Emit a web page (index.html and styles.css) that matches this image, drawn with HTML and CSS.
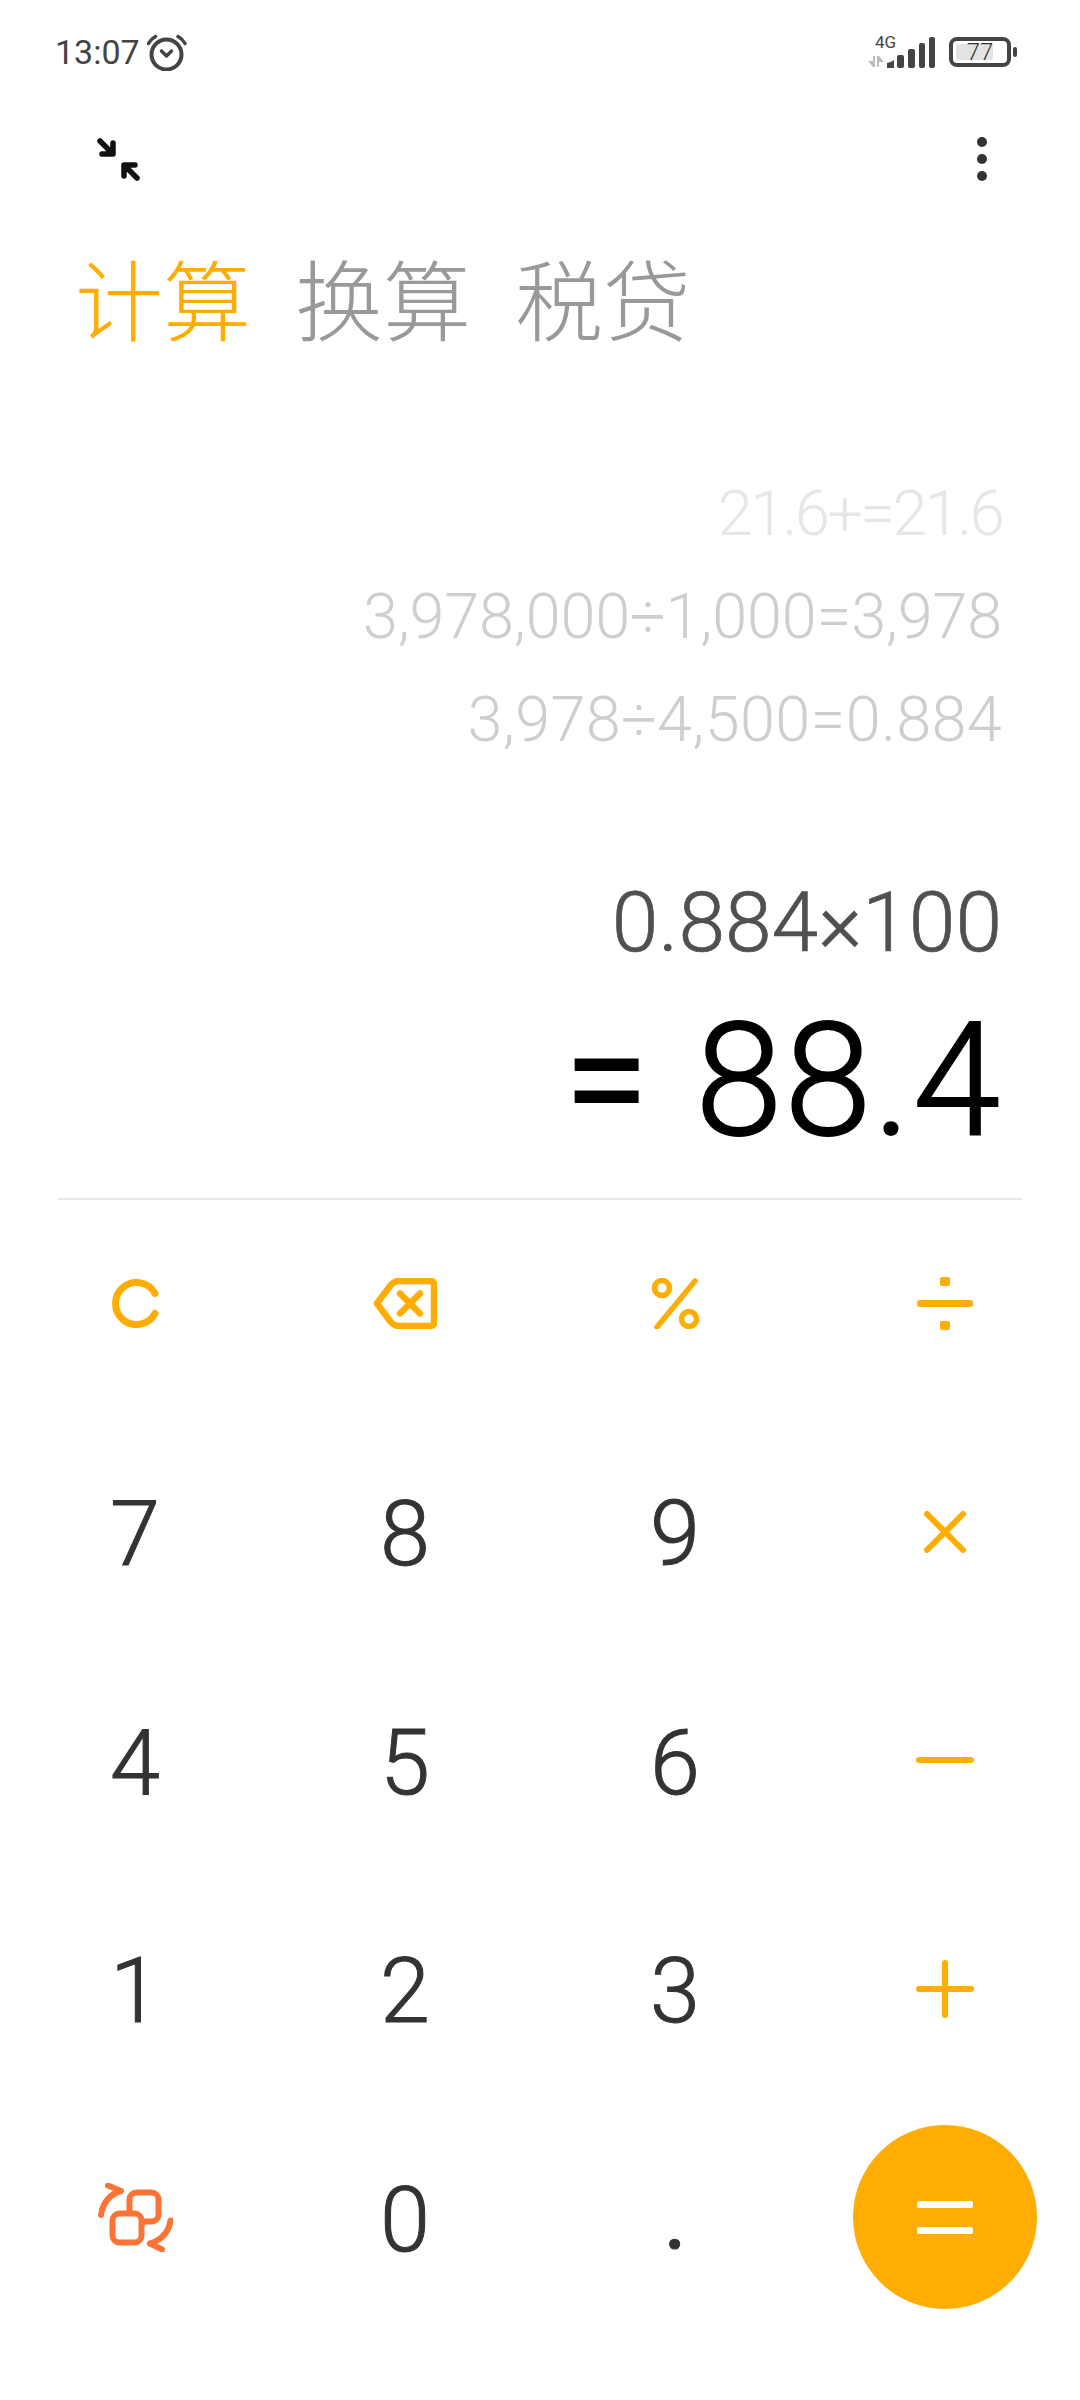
FILE: index.html
```html
<!DOCTYPE html>
<html lang="zh">
    <head>
        <meta charset="utf-8"/>
        <title>计算器</title>
        <link rel="stylesheet" href="styles.css">
    </head>
    <body>
        <div class="statusBar">
            <div class="statusLeft">
                <span class="clock">13:07</span>
                <svg class="alarm" width="40" height="37" viewBox="0 0 40 37" fill="none" stroke="#444444" stroke-linecap="round" stroke-linejoin="round">
                    <circle cx="19.5" cy="20.5" r="15" stroke-width="4"/>
                    <path d="M14.5 17l5 5 5-5" stroke-width="3.5"/>
                    <path d="M1.5 9.5Q4 5 8.5 2.5M38 9.5Q35.5 5 31 2.5" stroke-width="3.5"/>
                </svg>
            </div>
            <div class="statusRight">
                <div class="network">
                    <span class="netLabel">4G</span>
                    <svg width="68" height="32" viewBox="0 0 68 32" fill="#444444">
                        <path d="M5 20h2v11H5L0 25h5z" fill="#bbbbbb"/>
                        <path d="M9 20h2l5 6h-5v5H9z" fill="#bbbbbb"/>
                        <path d="M19 27q5-1 7-3v8h-7z"/>
                        <rect x="29" y="19" width="7" height="13" rx="2"/>
                        <rect x="40" y="13" width="7" height="19" rx="2"/>
                        <rect x="51" y="7" width="6" height="25" rx="2"/>
                        <rect x="61" y="1" width="6" height="31" rx="2"/>
                    </svg>
                </div>
                <div class="battery">
                    <div class="batteryBody">
                        <div class="batteryFill"></div>
                        <span class="batteryText">77</span>
                    </div>
                    <div class="batteryTip"></div>
                </div>
            </div>
        </div>

        <div class="toolBar">
            <svg width="43" height="43" viewBox="0 0 43 43" fill="none" stroke="#111111" stroke-width="5.5" stroke-linecap="round" stroke-linejoin="round">
                <path d="M3 3l12 12M16 5v11H5"/>
                <path d="M40 40L28 28M27 38V27h11"/>
            </svg>
            <div class="moreDots"><i></i><i></i><i></i></div>
        </div>

        <div class="tabs">
            <span class="tab tabActive">计算</span>
            <span class="tab">换算</span>
            <span class="tab">税贷</span>
        </div>

        <div class="display">
            <div class="history histFaint">21.6+=21.6</div>
            <div class="history histWide">3,978,000÷1,000=3,978</div>
            <div class="history histLast">3,978÷4,500=0.884</div>
            <div class="expression">0.884×100</div>
            <div class="result"><span class="resultEq">=</span>88.4</div>
        </div>

        <div class="keypad">
            <div class="key">
                <svg width="47" height="49" viewBox="0 0 47 49" fill="none" stroke="#ffad03" stroke-width="7" stroke-linecap="round">
                    <path d="M43 14.5A21 21 0 1 0 43 34.5"/>
                </svg>
            </div>
            <div class="key">
                <svg width="64" height="51" viewBox="0 0 64 51" fill="none" stroke="#ffad03" stroke-width="6.5" stroke-linecap="round" stroke-linejoin="round">
                    <path d="M4 25.5L17 8q4-5 9-5h31q4 0 4 4v37q0 4-4 4H26q-5 0-9-5z"/>
                    <path d="M27 15.5l20 20M47 15.5l-20 20"/>
                </svg>
            </div>
            <div class="key">
                <svg width="47" height="51" viewBox="0 0 47 51" fill="none" stroke="#ffad03" stroke-width="5.5" stroke-linecap="round">
                    <circle cx="10" cy="10" r="7.5"/>
                    <circle cx="37" cy="41" r="7.5"/>
                    <path d="M43 3L5 49"/>
                </svg>
            </div>
            <div class="key">
                <svg width="56" height="53" viewBox="0 0 56 53" fill="#ffad03">
                    <rect x="0" y="23" width="56" height="7" rx="3"/>
                    <rect x="23" y="0" width="10" height="9" rx="2"/>
                    <rect x="23" y="44" width="10" height="9" rx="2"/>
                </svg>
            </div>

            <div class="key keyNum">7</div>
            <div class="key keyNum">8</div>
            <div class="key keyNum">9</div>
            <div class="key">
                <svg width="44" height="44" viewBox="0 0 44 44" stroke="#ffad03" stroke-width="6" stroke-linecap="round">
                    <path d="M4 4l36 36M40 4L4 40"/>
                </svg>
            </div>

            <div class="key keyNum">4</div>
            <div class="key keyNum">5</div>
            <div class="key keyNum">6</div>
            <div class="key">
                <svg width="58" height="8" viewBox="0 0 58 8" fill="#ffad03">
                    <rect x="0" y="1" width="58" height="6" rx="3"/>
                </svg>
            </div>

            <div class="key keyNum">1</div>
            <div class="key keyNum">2</div>
            <div class="key keyNum">3</div>
            <div class="key">
                <svg width="58" height="58" viewBox="0 0 58 58" stroke="#ffad03" stroke-width="6" stroke-linecap="round">
                    <path d="M3 29h52M29 3v52"/>
                </svg>
            </div>

            <div class="key">
                <svg width="75" height="69" viewBox="0 0 75 69" fill="none" stroke="#fb7335" stroke-width="6" stroke-linecap="round" stroke-linejoin="round">
                    <rect x="31.5" y="9.5" width="29" height="29" rx="7"/>
                    <rect x="14.5" y="30.5" width="29" height="29" rx="7" fill="#ffffff"/>
                    <path d="M3 32Q6 13 23 8M10 2.5L23 8"/>
                    <path d="M72.5 37.5Q70 55 52 60.5M64 66.5L52 60.5"/>
                </svg>
            </div>
            <div class="key keyNum">0</div>
            <div class="key keyDot">.</div>
            <div class="key">
                <div class="equalsBtn">
                    <svg width="56" height="33" viewBox="0 0 56 33" fill="#ffffff">
                        <rect x="0" y="0" width="56" height="7" rx="2"/>
                        <rect x="0" y="26" width="56" height="7" rx="2"/>
                    </svg>
                </div>
            </div>
        </div>
    </body>
</html>
```

FILE: styles.css
```css
body {
    margin: 0;
    width: 1080px;
    height: 2400px;
    overflow: hidden;
    background: white;
    font-family: Roboto, "Noto Sans CJK SC", sans-serif;
    font-weight: 300;
}

.statusBar {
    height: 104px;
    padding: 0 63px 0 55px;
    display: flex;
    justify-content: space-between;
    align-items: center;
}

.statusLeft {
    display: flex;
    align-items: center;
    gap: 7px;
}

.clock {
    font-size: 34px;
    font-weight: 400;
    color: #444444;
}

.statusRight {
    display: flex;
    align-items: center;
    gap: 13px;
}

.network {
    position: relative;
    display: flex;
}

.netLabel {
    position: absolute;
    left: 7px;
    top: -1px;
    font-size: 17px;
    font-weight: 400;
    line-height: 14px;
    color: #444444;
}

.battery {
    display: flex;
    align-items: center;
    gap: 2px;
}

.batteryBody {
    width: 54px;
    height: 22px;
    border: 4px solid #444444;
    border-radius: 8px;
    display: flex;
    align-items: center;
    justify-content: center;
    position: relative;
}

.batteryFill {
    position: absolute;
    left: 3px;
    top: 3px;
    width: 37px;
    height: 16px;
    background: #e3e3e3;
    border-radius: 2px;
}

.batteryText {
    position: relative;
    font-size: 24px;
    font-weight: 300;
    color: #333333;
}

.batteryTip {
    width: 4px;
    height: 10px;
    background: #444444;
    border-radius: 2px;
}

.toolBar {
    height: 76px;
    margin-top: 17px;
    padding: 0 68px 0 97px;
    display: flex;
    justify-content: space-between;
    align-items: center;
}

.moreDots {
    display: flex;
    flex-direction: column;
    gap: 7px;
    width: 60px;
    align-items: center;
}

.moreDots i {
    width: 10px;
    height: 10px;
    background: #333333;
    border-radius: 50%;
}

.tabs {
    display: flex;
    gap: 44px;
    padding-left: 75px;
    margin-top: 52px;
}

.tab {
    font-size: 88px;
    line-height: 110px;
    font-weight: 300;
    color: #999999;
}

.tabActive {
    color: #ffad03;
}

.display {
    margin-top: 103px;
    padding: 0 78px;
    text-align: right;
}

.history {
    font-size: 63px;
    line-height: 103px;
    font-weight: 300;
    color: #cecece;
    white-space: nowrap;
}

.histFaint {
    color: #e6e6e6;
    letter-spacing: -2.6px;
}

.histWide {
    letter-spacing: -0.2px;
}

.histLast {
    letter-spacing: 0.3px;
}

.expression {
    margin-top: 91px;
    font-size: 84px;
    line-height: 122px;
    font-weight: 300;
    -webkit-text-stroke: 0.7px #505050;
    color: #505050;
}

.result {
    font-size: 157px;
    line-height: 180px;
    font-weight: 300;
    letter-spacing: 2px;
    -webkit-text-stroke: 2px #000000;
    color: #000000;
    border-bottom: 2px solid #e8e8e8;
    margin: 6px -20px 0;
    padding: 0 20px 28px 0;
}

.resultEq {
    margin-right: 44px;
    font-weight: 400;
    -webkit-text-stroke: 0;
}

.keypad {
    display: grid;
    grid-template-columns: repeat(4, 270px);
    grid-auto-rows: 228.5px;
    margin-top: -11px;
}

.key {
    display: flex;
    align-items: center;
    justify-content: center;
    font-size: 90px;
    font-weight: 300;
    -webkit-text-stroke: 1px #333333;
    color: #333333;
}

.keyNum {
    padding-top: 6px;
}

.keyDot {
    font-weight: 400;
}

.equalsBtn {
    width: 184px;
    height: 184px;
    border-radius: 50%;
    background: #ffad03;
    display: flex;
    align-items: center;
    justify-content: center;
}
```
